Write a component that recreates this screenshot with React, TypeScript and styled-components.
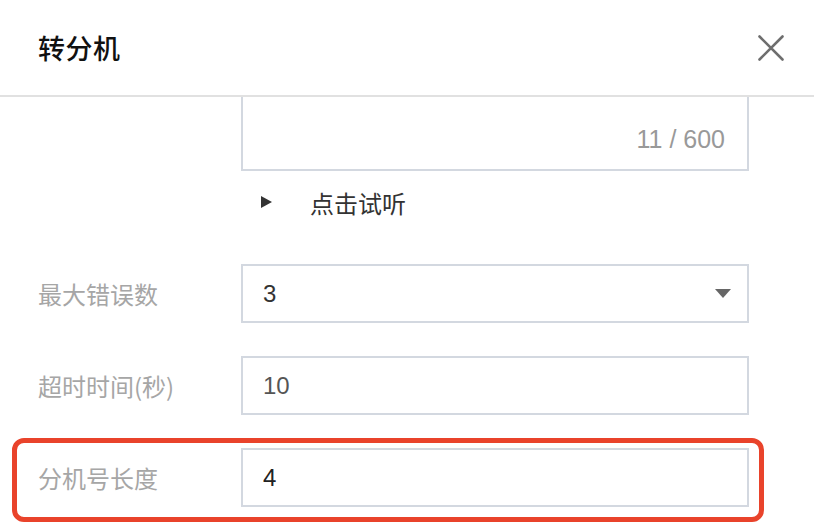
import React, { useLayoutEffect, useRef } from 'react';
import styled, { createGlobalStyle } from 'styled-components';

const GlobalStyle = createGlobalStyle`
  html, body {
    margin: 0;
    padding: 0;
    background: #fff;
  }

  body {
    font-family: "Noto Sans CJK SC", "Noto Sans", "Liberation Sans", sans-serif;
    color: #333;
  }

  * {
    box-sizing: border-box;
  }
`;

const Dialog = styled.div`
  display: flex;
  flex-direction: column;
  width: 814px;
  height: 528px;
  background: #fff;
  overflow: hidden;
`;

const Header = styled.div`
  display: flex;
  align-items: center;
  justify-content: space-between;
  flex-shrink: 0;
  height: 97px;
  padding: 0 30px 0 38px;
  border-bottom: 2px solid #e1e1e1;
`;

const Title = styled.h2`
  margin: 0;
  font-size: 27px;
  font-weight: 500;
  color: #111;
  letter-spacing: 0.5px;
`;

const CloseButton = styled.button`
  display: flex;
  align-items: center;
  justify-content: center;
  width: 26px;
  height: 26px;
  padding: 0;
  border: none;
  background: none;
  cursor: pointer;
`;

const Body = styled.div`
  flex: 1;
  overflow: hidden;
  padding: 24px 65px 40px 38px;
`;

const Field = styled.div<{ $highlight?: boolean }>`
  position: relative;
  display: flex;
  align-items: center;
  margin-top: ${(p) => (p.$highlight ? '33px' : '0')};

  &::before {
    content: '';
    display: ${(p) => (p.$highlight ? 'block' : 'none')};
    position: absolute;
    top: -10px;
    left: -26px;
    right: -15px;
    bottom: -15px;
    border: 5px solid #e9432b;
    border-radius: 12px;
    pointer-events: none;
  }
`;

const Label = styled.div`
  width: 203px;
  flex-shrink: 0;
  font-size: 24px;
  color: #a6a6a6;
`;

const Control = styled.div`
  width: 508px;
`;

const TextBox = styled.div`
  display: flex;
  flex-direction: column;
  height: 150px;
  border: 2px solid #d3d8e0;
  background: #fff;
`;

const TextArea = styled.textarea`
  flex: 1;
  border: none;
  outline: none;
  resize: none;
  padding: 14px 20px;
  font-family: inherit;
  font-size: 24px;
  color: #333;
`;

const Counter = styled.div`
  padding: 0 22px 18px 0;
  text-align: right;
  font-family: "Liberation Sans", "Noto Sans", sans-serif;
  font-size: 25px;
  line-height: 24px;
  color: #999;
`;

const PlayRow = styled.div`
  display: flex;
  align-items: center;
  gap: 38px;
  height: 62px;
  padding-left: 223px;
  margin-bottom: 31px;
  font-size: 24px;
  color: #333;
`;

const PlayIcon = styled.span`
  width: 0;
  height: 0;
  border-top: 6.5px solid transparent;
  border-bottom: 6.5px solid transparent;
  border-left: 11px solid #333;
`;

const SelectBox = styled.div`
  display: flex;
  align-items: center;
  justify-content: space-between;
  height: 59px;
  padding: 0 16px 0 20px;
  border: 2px solid #d3d8e0;
  font-family: "Liberation Sans", "Noto Sans", sans-serif;
  font-size: 24px;
  color: #333;
  cursor: pointer;
`;

const Caret = styled.span`
  width: 0;
  height: 0;
  border-left: 8px solid transparent;
  border-right: 8px solid transparent;
  border-top: 9px solid #666;
`;

const TextInput = styled.input<{ $muted?: boolean }>`
  display: block;
  width: 100%;
  height: 59px;
  padding: 0 20px;
  border: 2px solid #d3d8e0;
  outline: none;
  font-family: "Liberation Sans", "Noto Sans", sans-serif;
  font-size: 24px;
  color: ${(p) => (p.$muted ? '#555' : '#222')};
  background: #fff;
`;

const Gap = styled.div`
  height: 33px;
`;

const App = () => {
  const bodyRef = useRef<HTMLDivElement>(null);

  useLayoutEffect(() => {
    if (bodyRef.current) bodyRef.current.scrollTop = 100;
  }, []);

  return (
    <>
      <GlobalStyle />
      <Dialog>
        <Header>
          <Title>转分机</Title>
          <CloseButton aria-label="关闭">
            <svg width="26" height="26" viewBox="0 0 26 26">
              <path
                d="M1.5 1.5 L24.5 24.5 M24.5 1.5 L1.5 24.5"
                stroke="#6e6e6e"
                strokeWidth="2.6"
                strokeLinecap="round"
              />
            </svg>
          </CloseButton>
        </Header>
        <Body ref={bodyRef}>
          <Field>
            <Label />
            <Control>
              <TextBox>
                <TextArea defaultValue="请输入分机号，按#结束" />
                <Counter>11 / 600</Counter>
              </TextBox>
            </Control>
          </Field>
          <PlayRow>
            <PlayIcon />
            点击试听
          </PlayRow>
          <Field>
            <Label>最大错误数</Label>
            <Control>
              <SelectBox>
                <span>3</span>
                <Caret />
              </SelectBox>
            </Control>
          </Field>
          <Gap />
          <Field>
            <Label>超时时间(秒)</Label>
            <Control>
              <TextInput defaultValue="10" $muted />
            </Control>
          </Field>
          <Field $highlight>
            <Label>分机号长度</Label>
            <Control>
              <TextInput defaultValue="4" />
            </Control>
          </Field>
        </Body>
      </Dialog>
    </>
  );
};

export default App;
